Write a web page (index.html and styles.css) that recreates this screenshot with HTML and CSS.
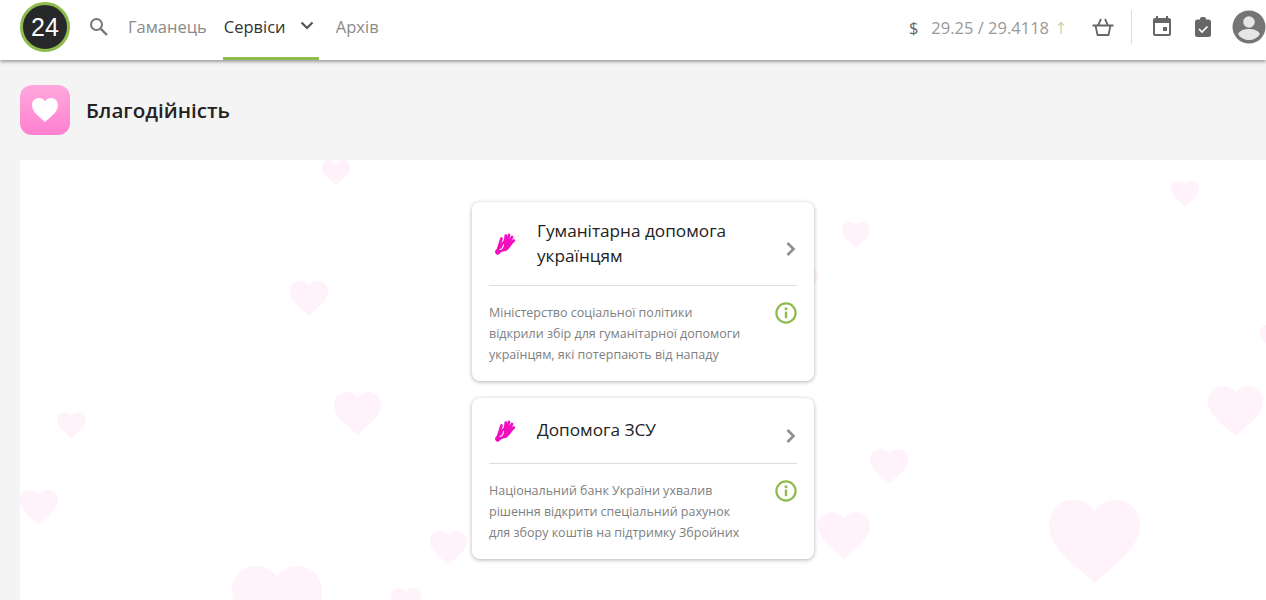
FILE: index.html
```html
<!DOCTYPE html>
<html lang="uk">
<head>
    <meta charset="UTF-8">
    <title>Благодійність</title>
    <link rel="stylesheet" href="styles.css">
</head>
<body>
    <svg width="0" height="0" class="defs">
        <symbol id="heart" viewBox="0 0 24 22">
            <path d="M12 22 C9 18.500 0 13.500 0 6.500 C0 2.800 2.800 0 6.300 0 C8.600 0 10.800 1 12 2.900 C13.200 1 15.400 0 17.700 0 C21.200 0 24 2.800 24 6.500 C24 13.500 15 18.500 12 22 Z"/>
        </symbol>
        <symbol id="hand" viewBox="0 0 24 24">
            <path fill="#f20fbf" d="M3 19 L6.500 14.500 L12 8 L20 9 L19 14 L15 18.500 L9.500 20 L6 23 Q3 22.500 3 19 Z"/>
            <g fill="none" stroke="#f20fbf" stroke-linecap="round" stroke-width="2.700">
                <path d="M6.500 16 L9.500 6.500"/>
                <path d="M13 11 L13.800 3.500 M15 11 L17 3 M16.500 11.500 L20 5 M17.500 13 L21.800 8.500"/>
            </g>
            <path fill="none" stroke="#fff" stroke-width="1.100" stroke-linecap="round" d="M8 17.500 Q11 17 11.500 12.500"/>
        </symbol>
        <symbol id="info" viewBox="0 0 22 22">
            <circle cx="11" cy="11" r="9.600" fill="none" stroke="#8dbb4c" stroke-width="2.200"/>
            <rect x="9.800" y="9.600" width="2.400" height="6.600" fill="#8dbb4c"/>
            <circle cx="11" cy="6.800" r="1.500" fill="#8dbb4c"/>
        </symbol>
        <symbol id="chevron" viewBox="0 0 12 16">
            <path d="M2.500 2 L8.500 8 L2.500 14" fill="none" stroke="#8f8f8f" stroke-width="2.600"/>
        </symbol>
    </svg>

    <!-- Header -->
    <header class="header">
        <div class="logo">24</div>
        <svg class="search-icon" width="24" height="24" viewBox="0 0 24 24">
            <circle cx="9.500" cy="9.500" r="5.500" fill="none" stroke="#757575" stroke-width="2"/>
            <path d="M13.800 13.800 L20 20" stroke="#757575" stroke-width="2.400"/>
        </svg>
        <nav class="nav">
            <a href="#" class="nav-item">Гаманець</a>
            <a href="#" class="nav-item active">Сервіси
                <svg width="24" height="24" viewBox="0 0 24 24"><path fill="none" stroke="#555" stroke-width="2.200" d="M6.500 8.500 L12 14 L17.500 8.500"/></svg>
            </a>
            <a href="#" class="nav-item">Архів</a>
        </nav>
        <div class="header-right">
            <span class="dollar">$</span>
            <span class="rate">29.25 / 29.4118</span>
            <svg class="arrow" width="8" height="13" viewBox="0 0 8 13"><path fill="none" stroke="#c9dcae" stroke-width="1.500" d="M4 13 V1.500 M1 4.500 L4 1.500 L7 4.500"/></svg>
            <svg class="basket" width="24" height="24" viewBox="0 0 24 24"><path fill="none" stroke="#666" stroke-width="1.800" stroke-linejoin="round" d="M1.500 10.500 H22.500 M4.500 10.500 L6.500 20 H17.500 L19.500 10.500 M7 10.500 L10 4 M17 10.500 L14 4"/></svg>
            <div class="divider"></div>
            <svg class="calendar" width="24" height="24" viewBox="0 0 24 24"><path fill="#666" d="M19 3h-1V1h-2v2H8V1H6v2H5a2 2 0 0 0-2 2v14a2 2 0 0 0 2 2h14a2 2 0 0 0 2-2V5a2 2 0 0 0-2-2zm0 16H5V8h14v11zM13 12h4v4h-4z"/></svg>
            <svg class="clipboard" width="20" height="22" viewBox="0 0 20 22">
                <rect x="2" y="3.500" width="16" height="17.500" rx="2.500" fill="#666"/>
                <rect x="7" y="1" width="6" height="5" rx="2" fill="#666"/>
                <path d="M6 13 L9 16 L14.500 10.500" fill="none" stroke="#fff" stroke-width="1.700"/>
            </svg>
            <svg class="avatar" width="34" height="34" viewBox="0 0 34 34">
                <circle cx="17" cy="17" r="16.500" fill="#757575"/>
                <circle cx="17" cy="12" r="5.800" fill="#e6e6e6"/>
                <path fill="#e6e6e6" d="M6 24 C8 20 13 19 17 19 C21 19 26 20 28 24 C25.500 28 21 30 17 30 C13 30 8.500 28 6 24 Z"/>
            </svg>
        </div>
    </header>

    <!-- Page title -->
    <div class="page-title">
        <div class="title-icon">
            <svg width="26" height="24"><use href="#heart" fill="#fff"/></svg>
        </div>
        <h1>Благодійність</h1>
    </div>

    <!-- Main panel -->
    <main class="panel">
        <svg class="bg-heart" style="left:302px;top:0;width:28px"><use href="#heart"/></svg>
        <svg class="bg-heart" style="left:1151px;top:21px;width:28px"><use href="#heart"/></svg>
        <svg class="bg-heart" style="left:822px;top:62px;width:28px"><use href="#heart"/></svg>
        <svg class="bg-heart" style="left:270px;top:121px;width:38px"><use href="#heart"/></svg>
        <svg class="bg-heart" style="left:37px;top:252px;width:29px"><use href="#heart"/></svg>
        <svg class="bg-heart" style="left:314px;top:232px;width:47px"><use href="#heart"/></svg>
        <svg class="bg-heart" style="left:1188px;top:226px;width:55px"><use href="#heart"/></svg>
        <svg class="bg-heart" style="left:850px;top:289px;width:38px"><use href="#heart"/></svg>
        <svg class="bg-heart" style="left:0;top:330px;width:38px"><use href="#heart"/></svg>
        <svg class="bg-heart" style="left:798px;top:352px;width:52px"><use href="#heart"/></svg>
        <svg class="bg-heart" style="left:410px;top:371px;width:37px"><use href="#heart"/></svg>
        <svg class="bg-heart" style="left:1029px;top:340px;width:91px"><use href="#heart"/></svg>
        <svg class="bg-heart" style="left:212px;top:406px;width:90px"><use href="#heart"/></svg>
        <svg class="bg-heart" style="left:371px;top:428px;width:30px"><use href="#heart"/></svg>
        <svg class="bg-heart" style="left:770px;top:108px;width:28px"><use href="#heart"/></svg>
        <svg class="bg-heart" style="left:1240px;top:165px;width:28px"><use href="#heart"/></svg>

        <div class="cards">
            <div class="card">
                <div class="card-head">
                    <svg class="hand" width="24" height="24"><use href="#hand"/></svg>
                    <h3>Гуманітарна допомога українцям</h3>
                    <svg class="chevron" width="12" height="16"><use href="#chevron"/></svg>
                </div>
                <div class="card-body">
                    <p>Міністерство соціальної політики відкрили збір для гуманітарної допомоги українцям, які потерпають від нападу</p>
                    <svg class="info" width="22" height="22"><use href="#info"/></svg>
                </div>
            </div>
            <div class="card">
                <div class="card-head short">
                    <svg class="hand" width="24" height="24"><use href="#hand"/></svg>
                    <h3>Допомога ЗСУ</h3>
                    <svg class="chevron" width="12" height="16"><use href="#chevron"/></svg>
                </div>
                <div class="card-body">
                    <p>Національний банк України ухвалив рішення відкрити спеціальний рахунок для збору коштів на підтримку Збройних</p>
                    <svg class="info" width="22" height="22"><use href="#info"/></svg>
                </div>
            </div>
        </div>
    </main>
</body>
</html>
```

FILE: styles.css
```css
* {
    margin: 0;
    padding: 0;
    box-sizing: border-box;
    font-family: "Open Sans", sans-serif;
}

html, body {
    height: 600px;
    overflow: hidden;
}

body {
    background: #f4f4f4;
    color: #222;
}

.defs {
    position: absolute;
}

/* Header */
.header {
    display: flex;
    align-items: center;
    height: 60px;
    padding-left: 20px;
    background: #fff;
    box-shadow: 0 2px 3px rgba(0,0,0,0.35);
    position: relative;
}

.logo {
    width: 50px;
    height: 50px;
    margin-bottom: 6px;
    border-radius: 50%;
    background: #27282a;
    border: 3px solid #8dbb4c;
    color: #fff;
    font-family: "Liberation Sans", sans-serif;
    font-size: 25px;
    line-height: 44px;
    text-align: center;
    flex-shrink: 0;
}

.search-icon {
    margin: 0 0 6px 17px;
}

.nav {
    display: flex;
    height: 60px;
    margin-left: 8px;
}

.nav-item {
    display: flex;
    align-items: center;
    height: 60px;
    padding: 0 9px 8px;
    font-size: 16.500px;
    color: #8a8a8a;
    text-decoration: none;
}

.nav-item.active {
    width: 96px;
    padding: 0 0 5px 1px;
    margin: 0 8px 0 7px;
    color: #333;
    border-bottom: 3px solid #8dbb4c;
    gap: 9px;
    white-space: nowrap;
}

.header-right {
    display: flex;
    align-items: center;
    margin-left: auto;
    height: 60px;
    padding-bottom: 6px;
}

.dollar {
    font-size: 16.500px;
    color: #666;
    margin-right: 13px;
}

.rate {
    font-size: 16.500px;
    color: #999;
}

.arrow {
    margin-left: 8px;
}

.basket {
    margin-left: 26px;
}

.divider {
    width: 1px;
    height: 34px;
    background: #ddd;
    margin: 0 18px 0 16px;
}

.clipboard {
    margin-left: 19px;
}

.avatar {
    margin-left: 19px;
    flex-shrink: 0;
}

/* Page title */
.page-title {
    display: flex;
    align-items: center;
    height: 100px;
    padding-left: 20px;
}

.title-icon {
    width: 50px;
    height: 50px;
    border-radius: 12px;
    background: linear-gradient(#ffa8dd, #ff80d0);
    display: flex;
    align-items: center;
    justify-content: center;
}

.page-title h1 {
    margin-left: 16px;
    font-size: 20.600px;
    font-weight: 600;
}

/* Panel with hearts */
.panel {
    position: relative;
    margin-left: 20px;
    height: 440px;
    background: #fff;
    overflow: hidden;
}

.bg-heart {
    position: absolute;
    aspect-ratio: 24 / 22;
    fill: #fff2fa;
}

.cards {
    position: relative;
    width: 342px;
    margin: 42px 0 0 452px;
}

.card {
    background: #fff;
    border-radius: 8px;
    box-shadow: 0 1px 4px rgba(0,0,0,0.3);
    padding: 0 17px;
    margin-bottom: 17px;
}

.card-head {
    display: flex;
    align-items: center;
    height: 84px;
    padding-top: 12px;
    border-bottom: 1px solid #ddd;
}

.card-head.short {
    height: 66px;
}

.hand {
    margin-left: 3px;
    margin-top: -12px;
    flex-shrink: 0;
}

.card-head h3 {
    flex: 1;
    margin: -14px 0 0 21px;
    font-size: 17.200px;
    font-weight: 500;
    line-height: 25px;
}

.chevron {
    margin-top: -2px;
}

.card-body {
    display: flex;
    justify-content: space-between;
    align-items: flex-start;
    padding: 16px 0;
}

.card-body p {
    width: 255px;
    font-size: 12.500px;
    line-height: 21px;
    color: #808080;
}
```
